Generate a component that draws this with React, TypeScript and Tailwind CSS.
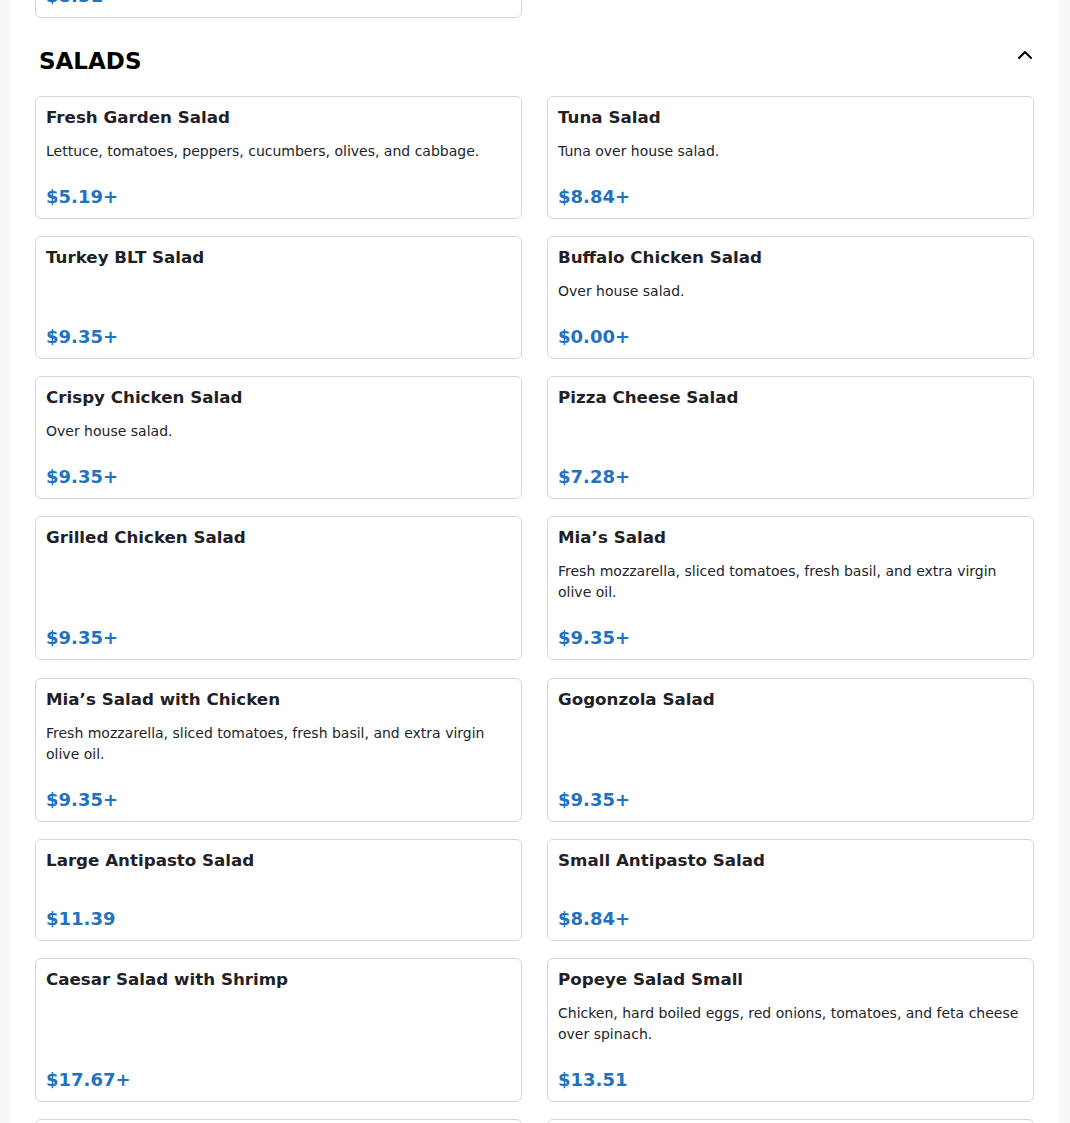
import React from "react";
import { ChevronUp } from "lucide-react";

type Item = { name: string; desc?: string; price: string };

const items: Item[] = [
  { name: "Fresh Garden Salad", desc: "Lettuce, tomatoes, peppers, cucumbers, olives, and cabbage.", price: "$5.19+" },
  { name: "Tuna Salad", desc: "Tuna over house salad.", price: "$8.84+" },
  { name: "Turkey BLT Salad", price: "$9.35+" },
  { name: "Buffalo Chicken Salad", desc: "Over house salad.", price: "$0.00+" },
  { name: "Crispy Chicken Salad", desc: "Over house salad.", price: "$9.35+" },
  { name: "Pizza Cheese Salad", price: "$7.28+" },
  { name: "Grilled Chicken Salad", price: "$9.35+" },
  { name: "Mia\u2019s Salad", desc: "Fresh mozzarella, sliced tomatoes, fresh basil, and extra virgin olive oil.", price: "$9.35+" },
  { name: "Mia\u2019s Salad with Chicken", desc: "Fresh mozzarella, sliced tomatoes, fresh basil, and extra virgin olive oil.", price: "$9.35+" },
  { name: "Gogonzola Salad", price: "$9.35+" },
  { name: "Large Antipasto Salad", price: "$11.39" },
  { name: "Small Antipasto Salad", price: "$8.84+" },
  { name: "Caesar Salad with Shrimp", price: "$17.67+" },
  { name: "Popeye Salad Small", desc: "Chicken, hard boiled eggs, red onions, tomatoes, and feta cheese over spinach.", price: "$13.51" },
  { name: "Chef Salad", desc: "Ham, turkey, cheese, and eggs over house salad.", price: "$11.39+" },
  { name: "Popeye Salad Large", desc: "Chicken, hard boiled eggs, red onions, tomatoes, and feta cheese over spinach.", price: "$15.59" },
];

function Card({ item }: { item: Item }) {
  return (
    <div className="flex flex-col rounded-[6px] border border-[#d6d6d6] bg-white px-[10px] pt-[8px] pb-[9px]">
      <div className="text-[16.7px] font-bold leading-[24px] text-[#1f2125]">{item.name}</div>
      <div className="mt-[12px] flex-1 text-[14px] leading-[21px] text-[#212529]">{item.desc}</div>
      <div className="mt-[23px] text-[18px] font-bold leading-[24px] text-[#2372c0]">{item.price}</div>
    </div>
  );
}

export default function App() {
  return (
    <div className="min-h-screen bg-[#f8f8f8] pl-[10px] pr-[11px]" style={{ fontFamily: '"DejaVu Sans", Verdana, sans-serif' }}>
      <div className="h-[1123px] overflow-hidden bg-white px-[25px]">
        <div className="grid grid-cols-2 gap-x-[25px]">
          <div className="mt-[-84px]">
            <Card item={{ name: "Garlic Knots", price: "$8.51" }} />
          </div>
        </div>
        <div className="flex items-start justify-between pl-[4px] pt-[27px] pb-[18px]">
          <h2 className="text-[23px] font-bold leading-[33px] text-black">SALADS</h2>
          <ChevronUp size={24} strokeWidth={2} className="mt-[-2px] mr-[-3px] text-black" />
        </div>
        <div className="grid grid-cols-2 gap-x-[25px] gap-y-[17.15px]">
          {items.map((it) => (
            <Card key={it.name} item={it} />
          ))}
        </div>
      </div>
    </div>
  );
}
